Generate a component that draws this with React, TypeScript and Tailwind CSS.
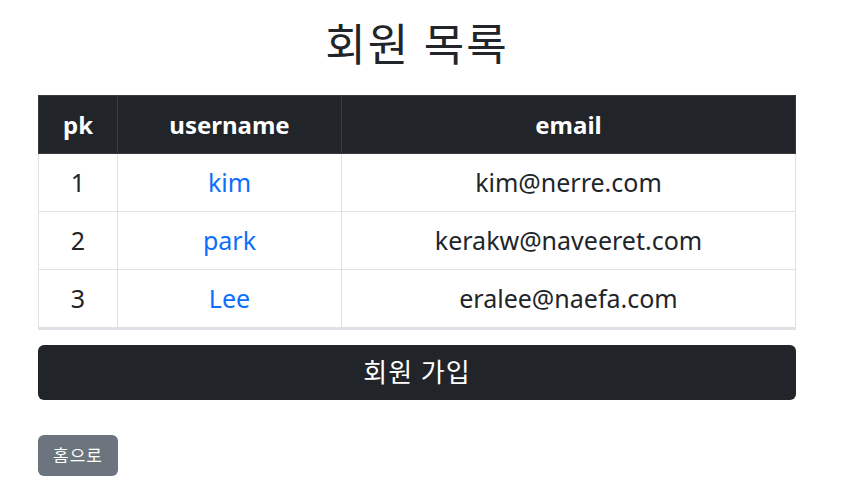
import React from "react";

const members = [
    { pk: 1, username: "kim", email: "kim@nerre.com" },
    { pk: 2, username: "park", email: "kerakw@naveeret.com" },
    { pk: 3, username: "Lee", email: "eralee@naefa.com" },
];

export default function App() {
    return (
        <div className="min-h-screen bg-white text-[#212529] font-['Noto_Sans','Noto_Sans_CJK_KR',sans-serif]">
            <div className="ml-[38px] w-[758px] pt-[14px]">
                <h1 className="text-center text-[44px] leading-[60px] font-normal tracking-[2px] mb-[21px]">회원 목록</h1>
                <table className="w-full border-collapse text-center text-[25px]">
                    <thead>
                        <tr className="bg-[#212529] text-white h-[58px] text-[24px]">
                            <th className="w-[79px] border border-[#373b3e] font-bold">pk</th>
                            <th className="w-[224px] border border-[#373b3e] font-bold">username</th>
                            <th className="border border-[#373b3e] font-bold">email</th>
                        </tr>
                    </thead>
                    <tbody>
                        {members.map(m => (
                            <tr key={m.pk} className="h-[58px]">
                                <td className="border border-[#dee2e6]">{m.pk}</td>
                                <td className="border border-[#dee2e6]">
                                    <a href="#" className="text-[#0d6efd]">{m.username}</a>
                                </td>
                                <td className="border border-[#dee2e6]">{m.email}</td>
                            </tr>
                        ))}
                    </tbody>
                </table>
                <div className="h-[2px] bg-[#dee2e6]"></div>
                <button className="mt-[15px] w-full h-[55px] rounded-[6px] bg-[#212529] text-white text-[26px] tracking-[1px]">회원 가입</button>
                <div className="mt-[35px]">
                    <button className="w-[80px] h-[41px] rounded-[6px] bg-[#6c757d] text-white text-[17px] tracking-[1px]">홈으로</button>
                </div>
            </div>
        </div>
    );
}
